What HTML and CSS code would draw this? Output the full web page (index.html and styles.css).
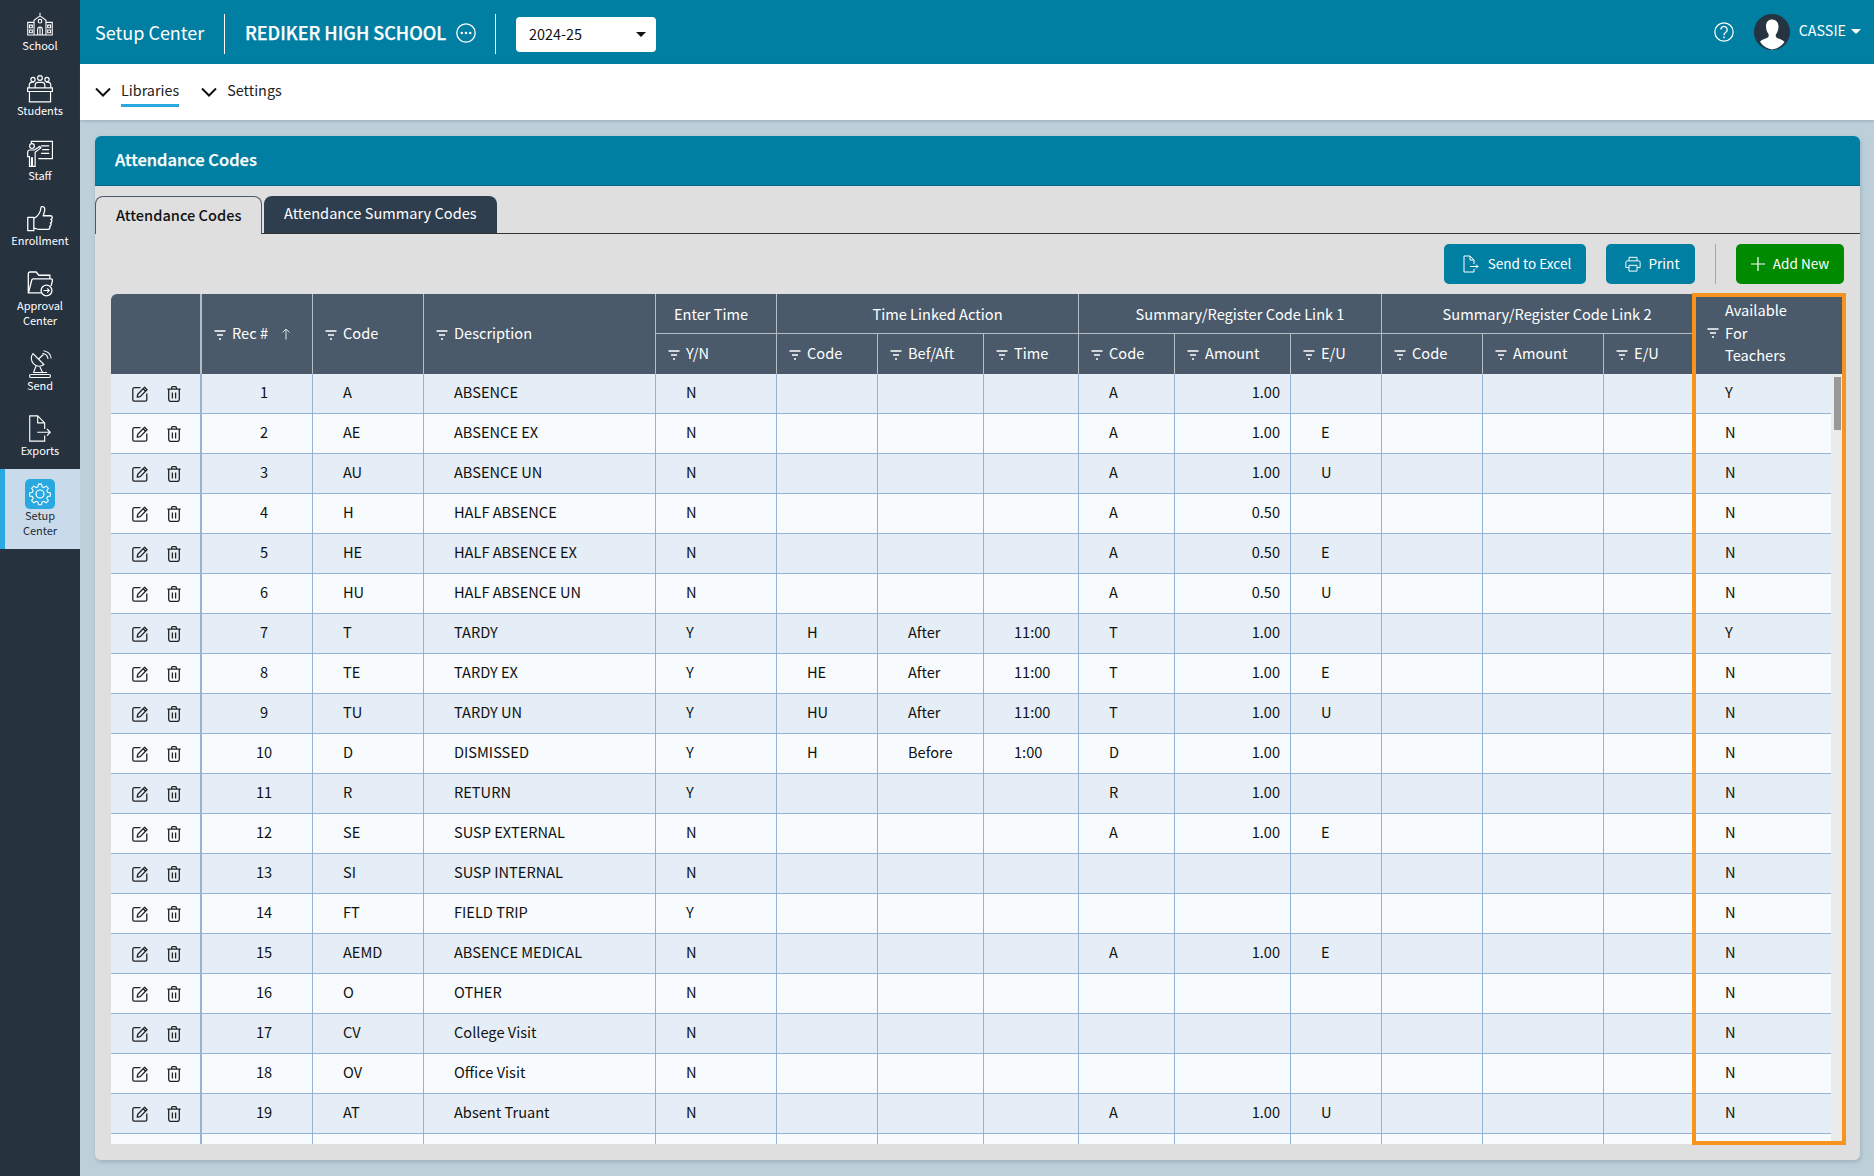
FILE: index.html
```html
<!DOCTYPE html>
<html lang="en">
<head>
<meta charset="utf-8">
<title>Attendance Codes</title>
<link rel="stylesheet" href="styles.css">
</head>
<body>
<svg class="defs" aria-hidden="true">
  <symbol id="i-filter" viewBox="0 0 12 10"><path d="M0.5 1h11M3 5h6M5 9h2" fill="none" stroke="currentColor" stroke-width="1.3"/></symbol>
  <symbol id="i-edit" viewBox="0 0 16 16"><path d="M8.5 1.700H2.200A1.400 1.400 0 0 0 .8 3.100v10.700a1.400 1.400 0 0 0 1.400 1.400h11.200a1.400 1.400 0 0 0 1.400-1.400V7.500" fill="none" stroke="currentColor" stroke-width="1.300"/><path d="M5.200 11.200l.6-3L12.600 1.300l2.400 2.400-6.800 6.900zM11.200 2.800l2.400 2.400" fill="none" stroke="currentColor" stroke-width="1.300" stroke-linejoin="round"/></symbol>
  <symbol id="i-trash" viewBox="0 0 14 16"><path d="M.4 3.200h13.200M4.600 3V1.900A1.200 1.200 0 0 1 5.800.7h2.400a1.200 1.200 0 0 1 1.200 1.200V3M1.700 3.400v9.800a2.300 2.300 0 0 0 2.300 2.300h6a2.300 2.300 0 0 0 2.300-2.300V3.400M5.400 6.600v5.800M8.600 6.600v5.800" fill="none" stroke="currentColor" stroke-width="1.300"/></symbol>
  <symbol id="i-school" viewBox="0 0 24 22"><g fill="none" stroke="currentColor" stroke-width="1"><path d="M6.500 21V7.500L12 3.500l5.500 4V21M12 3.500V.5M.7 21V9.500h5.800M23.300 21V9.500h-5.800M.2 21.200h23.600M9.800 21v-5a2.200 2.200 0 0 1 4.400 0v5M12 13.800V21"/><circle cx="12" cy="8.400" r="1.700"/><path d="M2.300 12h2.600v2.500H2.300zM2.300 16.500h2.600V19H2.300zM19.100 12h2.600v2.500h-2.600zM19.100 16.500h2.600V19h-2.600z"/></g></symbol>
  <symbol id="i-students" viewBox="0 0 24 26"><g fill="none" stroke="currentColor" stroke-width="1.100"><circle cx="12" cy="2.800" r="2.200"/><circle cx="5.500" cy="4.200" r="2"/><circle cx="18.500" cy="4.200" r="2"/><path d="M2 12V9.600a3 3 0 0 1 3-3h1.400M22 12V9.600a3 3 0 0 0-3-3h-1.400M7.500 12V9.400a2.600 2.600 0 0 1 2.600-2.600h3.800a2.600 2.600 0 0 1 2.600 2.600V12M.5 12h23v3.300H.5zM2.200 15.300V25h19.600v-9.700"/></g></symbol>
  <symbol id="i-staff" viewBox="0 0 24 25"><g fill="none" stroke="currentColor" stroke-width="1.100"><path d="M4 3V.8h19.500v16H10.500M13 5h7.500M14 8.500h6.500M13 12h7.500"/><circle cx="4.600" cy="5.200" r="2.200"/><path d="M.6 15V10.800a2 2 0 0 1 2-2h4.200l5-3.300 1 1.400-5.300 4V24H5V16H4.200V24H2.300V15z"/></g></symbol>
  <symbol id="i-thumb" viewBox="0 0 24 24"><g fill="none" stroke="currentColor" stroke-width="1.200" stroke-linejoin="round"><path d="M.7 10.500h5.600v12.300H.7zM6.300 11.500c3-1.500 6.200-5.200 6.700-10.300.1-1 3.300-.9 3.400 1.500.1 2.200-1 5-1.500 6.300h6.700c2 0 2.300 3 .4 3.400 1.400.6 1.200 3-.4 3.200 1 .8.8 2.900-.7 3.100.6 1 .2 2.900-1.600 2.900h-8c-2 0-3-1-5-1.200"/></g></symbol>
  <symbol id="i-folder" viewBox="0 0 24 24"><g fill="none" stroke="currentColor" stroke-width="1.200"><path d="M13 20.200H1.200V2.400a1.500 1.500 0 0 1 1.500-1.500h5.700l2.600 3h10.100v3M1.400 20l3-11.700a1.300 1.300 0 0 1 1.300-1h16.600a1.200 1.200 0 0 1 1.200 1.500l-1.200 5"/><circle cx="18" cy="18" r="5"/><path d="M15.300 18h5.200M18.600 16l2 2-2 2" stroke-width="1"/></g></symbol>
  <symbol id="i-send" viewBox="0 0 24 28"><g fill="none" stroke="currentColor" stroke-width="1.100"><path d="M5 3.500c-2.500 3-2.200 7.500.6 10.400s7.300 3 10.300.6z"/><path d="M10.500 9l5-4.500M8 16l-2.500 6.500M12 17l2.500 5.500M3 24.500h18a1.500 1.500 0 0 1 0 3H3a1.500 1.500 0 0 1 0-3zM5 22.500h14"/><path d="M14.500 3.500a6 6 0 0 1 5.500 5.500M15.500.8a9 9 0 0 1 7.700 7.700"/></g></symbol>
  <symbol id="i-export" viewBox="0 0 24 30"><g fill="none" stroke="currentColor" stroke-width="1.200"><path d="M17 15V8.500L9.500 1H1v27h16v-6M9.500 1v7.500H17M9 18.500h14M19.500 15l3.500 3.500-3.500 3.500"/></g></symbol>
  <symbol id="i-gear" viewBox="0 0 24 24"><g fill="none" stroke="currentColor" stroke-width="1.200"><path d="M10.300 1h3.400l.6 3 2 .9 2.600-1.700 2.400 2.400-1.700 2.600.9 2 3 .6v3.400l-3 .6-.9 2 1.700 2.600-2.400 2.400-2.600-1.700-2 .9-.6 3h-3.400l-.6-3-2-.9-2.600 1.700-2.400-2.400 1.700-2.600-.9-2-3-.6v-3.400l3-.6.9-2-1.700-2.600 2.400-2.400 2.600 1.700 2-.9z" transform="translate(1.200 1.200) scale(.9)"/><circle cx="12" cy="12" r="4"/></g></symbol>
</svg>

<div class="app">
  <aside class="sidebar">
    <a class="nav-item"><svg class="nav-icon"><use href="#i-school"/></svg><span>School</span></a>
    <a class="nav-item"><svg class="nav-icon"><use href="#i-students"/></svg><span>Students</span></a>
    <a class="nav-item"><svg class="nav-icon"><use href="#i-staff"/></svg><span>Staff</span></a>
    <a class="nav-item"><svg class="nav-icon"><use href="#i-thumb"/></svg><span>Enrollment</span></a>
    <a class="nav-item nav-tall"><svg class="nav-icon"><use href="#i-folder"/></svg><span>Approval<br>Center</span></a>
    <a class="nav-item"><svg class="nav-icon"><use href="#i-send"/></svg><span>Send</span></a>
    <a class="nav-item nav-last"><svg class="nav-icon"><use href="#i-export"/></svg><span>Exports</span></a>
    <a class="nav-item nav-active"><span class="gear-tile"><svg class="gear"><use href="#i-gear"/></svg></span><span>Setup<br>Center</span></a>
  </aside>

  <div class="main">
    <header class="topbar">
      <div class="app-title">Setup Center</div>
      <div class="school">
        <span>REDIKER HIGH SCHOOL</span>
        <svg class="dots" viewBox="0 0 20 20"><circle cx="10" cy="10" r="9.200" fill="none" stroke="currentColor" stroke-width="1.300"/><circle cx="5.800" cy="10" r="1.300" fill="currentColor"/><circle cx="10" cy="10" r="1.300" fill="currentColor"/><circle cx="14.200" cy="10" r="1.300" fill="currentColor"/></svg>
      </div>
      <div class="year-select"><span>2024-25</span><i class="caret-dark"></i></div>
      <div class="top-right">
        <svg class="help" viewBox="0 0 20 20"><circle cx="10" cy="10" r="9.200" fill="none" stroke="currentColor" stroke-width="1.200"/><path d="M6.800 7.600a3.200 3.200 0 1 1 5 2.700c-1.200.8-1.800 1.400-1.800 2.900" fill="none" stroke="currentColor" stroke-width="1.300"/><circle cx="10" cy="15.300" r=".9" fill="currentColor"/></svg>
        <svg class="avatar" viewBox="0 0 36 36"><circle cx="18" cy="18" r="18" fill="#263442"/><path d="M18 5.500c4.300 0 6.700 3.200 6.500 7.500-.1 2.500-.9 5-2.300 7-.7 1-.6 3 .6 3.700 2.400 1.300 6 2 7.700 4.300A17.500 17.500 0 0 1 18 35.500 17.500 17.500 0 0 1 6 27.800c1.700-2.300 5.300-3 7.700-4.300 1.200-.7 1.300-2.700.6-3.700-1.400-2-2.200-4.500-2.300-7-.2-4.300 2.200-7.500 6.500-7.500z" fill="#fff"/></svg>
        <span class="user">CASSIE</span><i class="caret-light"></i>
      </div>
    </header>

    <nav class="subnav">
      <div class="sub-item"><svg class="chev" viewBox="0 0 16 10"><path d="M1 1.500l7 7 7-7" fill="none" stroke="currentColor" stroke-width="2"/></svg><span class="sub-link sub-current">Libraries</span></div>
      <div class="sub-item"><svg class="chev" viewBox="0 0 16 10"><path d="M1 1.500l7 7 7-7" fill="none" stroke="currentColor" stroke-width="2"/></svg><span class="sub-link">Settings</span></div>
    </nav>

    <main class="content">
      <section class="panel">
        <h1 class="panel-head">Attendance Codes</h1>
        <div class="panel-body">
          <div class="tabs">
            <div class="tab tab-on">Attendance Codes</div>
            <div class="tab tab-off">Attendance Summary Codes</div>
          </div>
          <div class="toolbar">
            <button class="btn btn-blue btn-excel"><svg class="btn-ico" viewBox="0 0 16 18"><path d="M11 9V5L7 1H1v16h10v-3M7 1v4h4M7 11.500h8M13 9.500l2 2-2 2" fill="none" stroke="currentColor" stroke-width="1"/></svg><span>Send to Excel</span></button>
            <button class="btn btn-blue btn-print"><svg class="btn-ico" viewBox="0 0 18 18"><path d="M4.500 5.500V1.500h9v4M4.500 13H1V7a1.500 1.500 0 0 1 1.500-1.500h13A1.500 1.500 0 0 1 17 7v6h-3.500M4.500 10.500h9v6.500h-9z" fill="none" stroke="currentColor" stroke-width="1.100"/></svg><span>Print</span></button>
            <span class="tool-sep"></span>
            <button class="btn btn-green"><svg class="btn-ico plus" viewBox="0 0 14 14"><path d="M7 0v14M0 7h14" fill="none" stroke="currentColor" stroke-width="1.200"/></svg><span>Add New</span></button>
          </div>

          <div class="grid-frame">
            <div class="grid">
              <table class="codes">
                <colgroup>
                  <col class="c-act"><col class="c-rec"><col class="c-code"><col class="c-desc"><col class="c-yn"><col class="c-tcode"><col class="c-bef"><col class="c-time"><col class="c-scode"><col class="c-amt"><col class="c-eu"><col class="c-scode2"><col class="c-amt2"><col class="c-eu2"><col class="c-avail">
                </colgroup>
                <thead>
                  <tr>
                    <th rowspan="2" class="th-act"></th>
                    <th rowspan="2"><svg class="fl"><use href="#i-filter"/></svg>Rec #<svg class="sort" viewBox="0 0 10 12"><path d="M5 11.500V1M1.500 4.500L5 1l3.500 3.500" fill="none" stroke="currentColor" stroke-width="1"/></svg></th>
                    <th rowspan="2"><svg class="fl"><use href="#i-filter"/></svg>Code</th>
                    <th rowspan="2"><svg class="fl"><use href="#i-filter"/></svg>Description</th>
                    <th class="th-group th-enter">Enter Time</th>
                    <th colspan="3" class="th-group">Time Linked Action</th>
                    <th colspan="3" class="th-group">Summary/Register Code Link 1</th>
                    <th colspan="3" class="th-group">Summary/Register Code Link 2</th>
                    <th rowspan="2" class="th-avail"><svg class="fl"><use href="#i-filter"/></svg><span class="avail-text">Available<br>For<br>Teachers</span></th>
                  </tr>
                  <tr>
                    <th><svg class="fl"><use href="#i-filter"/></svg>Y/N</th>
                    <th><svg class="fl"><use href="#i-filter"/></svg>Code</th>
                    <th><svg class="fl"><use href="#i-filter"/></svg>Bef/Aft</th>
                    <th><svg class="fl"><use href="#i-filter"/></svg>Time</th>
                    <th><svg class="fl"><use href="#i-filter"/></svg>Code</th>
                    <th><svg class="fl"><use href="#i-filter"/></svg>Amount</th>
                    <th><svg class="fl"><use href="#i-filter"/></svg>E/U</th>
                    <th><svg class="fl"><use href="#i-filter"/></svg>Code</th>
                    <th><svg class="fl"><use href="#i-filter"/></svg>Amount</th>
                    <th><svg class="fl"><use href="#i-filter"/></svg>E/U</th>
                  </tr>
                </thead>
                <tbody>
                  <tr><td class="act"><svg class="i-e"><use href="#i-edit"/></svg><svg class="i-t"><use href="#i-trash"/></svg></td><td class="rec">1</td><td>A</td><td>ABSENCE</td><td>N</td><td></td><td></td><td></td><td>A</td><td class="amt">1.00</td><td></td><td></td><td></td><td></td><td class="av">Y</td></tr>
                  <tr><td class="act"><svg class="i-e"><use href="#i-edit"/></svg><svg class="i-t"><use href="#i-trash"/></svg></td><td class="rec">2</td><td>AE</td><td>ABSENCE EX</td><td>N</td><td></td><td></td><td></td><td>A</td><td class="amt">1.00</td><td>E</td><td></td><td></td><td></td><td class="av">N</td></tr>
                  <tr><td class="act"><svg class="i-e"><use href="#i-edit"/></svg><svg class="i-t"><use href="#i-trash"/></svg></td><td class="rec">3</td><td>AU</td><td>ABSENCE UN</td><td>N</td><td></td><td></td><td></td><td>A</td><td class="amt">1.00</td><td>U</td><td></td><td></td><td></td><td class="av">N</td></tr>
                  <tr><td class="act"><svg class="i-e"><use href="#i-edit"/></svg><svg class="i-t"><use href="#i-trash"/></svg></td><td class="rec">4</td><td>H</td><td>HALF ABSENCE</td><td>N</td><td></td><td></td><td></td><td>A</td><td class="amt">0.50</td><td></td><td></td><td></td><td></td><td class="av">N</td></tr>
                  <tr><td class="act"><svg class="i-e"><use href="#i-edit"/></svg><svg class="i-t"><use href="#i-trash"/></svg></td><td class="rec">5</td><td>HE</td><td>HALF ABSENCE EX</td><td>N</td><td></td><td></td><td></td><td>A</td><td class="amt">0.50</td><td>E</td><td></td><td></td><td></td><td class="av">N</td></tr>
                  <tr><td class="act"><svg class="i-e"><use href="#i-edit"/></svg><svg class="i-t"><use href="#i-trash"/></svg></td><td class="rec">6</td><td>HU</td><td>HALF ABSENCE UN</td><td>N</td><td></td><td></td><td></td><td>A</td><td class="amt">0.50</td><td>U</td><td></td><td></td><td></td><td class="av">N</td></tr>
                  <tr><td class="act"><svg class="i-e"><use href="#i-edit"/></svg><svg class="i-t"><use href="#i-trash"/></svg></td><td class="rec">7</td><td>T</td><td>TARDY</td><td>Y</td><td>H</td><td>After</td><td>11:00</td><td>T</td><td class="amt">1.00</td><td></td><td></td><td></td><td></td><td class="av">Y</td></tr>
                  <tr><td class="act"><svg class="i-e"><use href="#i-edit"/></svg><svg class="i-t"><use href="#i-trash"/></svg></td><td class="rec">8</td><td>TE</td><td>TARDY EX</td><td>Y</td><td>HE</td><td>After</td><td>11:00</td><td>T</td><td class="amt">1.00</td><td>E</td><td></td><td></td><td></td><td class="av">N</td></tr>
                  <tr><td class="act"><svg class="i-e"><use href="#i-edit"/></svg><svg class="i-t"><use href="#i-trash"/></svg></td><td class="rec">9</td><td>TU</td><td>TARDY UN</td><td>Y</td><td>HU</td><td>After</td><td>11:00</td><td>T</td><td class="amt">1.00</td><td>U</td><td></td><td></td><td></td><td class="av">N</td></tr>
                  <tr><td class="act"><svg class="i-e"><use href="#i-edit"/></svg><svg class="i-t"><use href="#i-trash"/></svg></td><td class="rec">10</td><td>D</td><td>DISMISSED</td><td>Y</td><td>H</td><td>Before</td><td>1:00</td><td>D</td><td class="amt">1.00</td><td></td><td></td><td></td><td></td><td class="av">N</td></tr>
                  <tr><td class="act"><svg class="i-e"><use href="#i-edit"/></svg><svg class="i-t"><use href="#i-trash"/></svg></td><td class="rec">11</td><td>R</td><td>RETURN</td><td>Y</td><td></td><td></td><td></td><td>R</td><td class="amt">1.00</td><td></td><td></td><td></td><td></td><td class="av">N</td></tr>
                  <tr><td class="act"><svg class="i-e"><use href="#i-edit"/></svg><svg class="i-t"><use href="#i-trash"/></svg></td><td class="rec">12</td><td>SE</td><td>SUSP EXTERNAL</td><td>N</td><td></td><td></td><td></td><td>A</td><td class="amt">1.00</td><td>E</td><td></td><td></td><td></td><td class="av">N</td></tr>
                  <tr><td class="act"><svg class="i-e"><use href="#i-edit"/></svg><svg class="i-t"><use href="#i-trash"/></svg></td><td class="rec">13</td><td>SI</td><td>SUSP INTERNAL</td><td>N</td><td></td><td></td><td></td><td></td><td class="amt"></td><td></td><td></td><td></td><td></td><td class="av">N</td></tr>
                  <tr><td class="act"><svg class="i-e"><use href="#i-edit"/></svg><svg class="i-t"><use href="#i-trash"/></svg></td><td class="rec">14</td><td>FT</td><td>FIELD TRIP</td><td>Y</td><td></td><td></td><td></td><td></td><td class="amt"></td><td></td><td></td><td></td><td></td><td class="av">N</td></tr>
                  <tr><td class="act"><svg class="i-e"><use href="#i-edit"/></svg><svg class="i-t"><use href="#i-trash"/></svg></td><td class="rec">15</td><td>AEMD</td><td>ABSENCE MEDICAL</td><td>N</td><td></td><td></td><td></td><td>A</td><td class="amt">1.00</td><td>E</td><td></td><td></td><td></td><td class="av">N</td></tr>
                  <tr><td class="act"><svg class="i-e"><use href="#i-edit"/></svg><svg class="i-t"><use href="#i-trash"/></svg></td><td class="rec">16</td><td>O</td><td>OTHER</td><td>N</td><td></td><td></td><td></td><td></td><td class="amt"></td><td></td><td></td><td></td><td></td><td class="av">N</td></tr>
                  <tr><td class="act"><svg class="i-e"><use href="#i-edit"/></svg><svg class="i-t"><use href="#i-trash"/></svg></td><td class="rec">17</td><td>CV</td><td>College Visit</td><td>N</td><td></td><td></td><td></td><td></td><td class="amt"></td><td></td><td></td><td></td><td></td><td class="av">N</td></tr>
                  <tr><td class="act"><svg class="i-e"><use href="#i-edit"/></svg><svg class="i-t"><use href="#i-trash"/></svg></td><td class="rec">18</td><td>OV</td><td>Office Visit</td><td>N</td><td></td><td></td><td></td><td></td><td class="amt"></td><td></td><td></td><td></td><td></td><td class="av">N</td></tr>
                  <tr><td class="act"><svg class="i-e"><use href="#i-edit"/></svg><svg class="i-t"><use href="#i-trash"/></svg></td><td class="rec">19</td><td>AT</td><td>Absent Truant</td><td>N</td><td></td><td></td><td></td><td>A</td><td class="amt">1.00</td><td>U</td><td></td><td></td><td></td><td class="av">N</td></tr>
                  <tr><td class="act"></td><td class="rec"></td><td></td><td></td><td></td><td></td><td></td><td></td><td></td><td class="amt"></td><td></td><td></td><td></td><td></td><td class="av"></td></tr>
                </tbody>
              </table>
              <div class="scroll-col"><div class="scroll-corner"></div><div class="scroll-track"><div class="scroll-thumb"></div></div></div>
            </div>
            <div class="highlight"></div>
          </div>
        </div>
      </section>
    </main>
  </div>
</div>
</body>
</html>
```
FILE: styles.css
```css
* { box-sizing: border-box; }
html, body { margin: 0; padding: 0; height: 100%; }
body {
  font-family: "Noto Sans CJK SC", "Noto Sans", sans-serif;
  font-size: 14.6px;
  color: #111;
  overflow: hidden;
}
.defs { position: absolute; width: 0; height: 0; }
.app { display: flex; width: 1874px; height: 1176px; background: #bdd0da; }

/* Sidebar */
.sidebar { width: 80px; flex: none; background: #27323f; color: #fff; display: flex; flex-direction: column; }
.nav-item { display: flex; flex-direction: column; align-items: center; height: 65px; padding-top: 10px; font-size: 11px; line-height: 15px; text-align: center; }
.nav-tall { height: 80px; }
.nav-last { height: 64px; }
.nav-icon { width: 26px; height: 28px; flex: none; color: #fff; }
.nav-active { height: 80px; background: #c9dbeb; border-left: 5px solid #29a9e0; color: #1f2a36; padding-right: 5px; }
.gear-tile { width: 30px; height: 30px; margin-bottom: -1px; flex: none; background: #29a9e0; border-radius: 5px; display: flex; align-items: center; justify-content: center; color: #fff; }
.gear { width: 24px; height: 24px; }

/* Main column */
.main { flex: 1; min-width: 0; display: flex; flex-direction: column; }
.topbar { height: 64px; flex: none; background: #007fa3; color: #fff; display: flex; align-items: center; padding-left: 15px; }
.app-title { font-size: 18px; width: 130px; height: 40px; margin-top: 3px; line-height: 37px; border-right: 1px solid #fff; }
.school { display: flex; align-items: center; gap: 10px; width: 271px; height: 40px; margin-top: 3px; padding: 0 0 3px 20px; border-right: 1px solid #fff; font-size: 18px; font-weight: 500; -webkit-text-stroke: .25px #fff; white-space: nowrap; }
.dots { width: 20px; height: 20px; flex: none; margin-top: 1px; }
.year-select { margin: 5px 0 0 20px; width: 140px; height: 35px; background: #fff; border-radius: 4px; color: #111; display: flex; align-items: center; justify-content: space-between; padding: 0 10px 2px 13px; font-size: 14.4px; }
.caret-dark { width: 0; height: 0; margin-top: 2px; border-left: 5px solid transparent; border-right: 5px solid transparent; border-top: 5px solid #111; }
.top-right { margin-left: auto; display: flex; align-items: center; padding-right: 13px; }
.help { width: 20px; height: 20px; margin-right: 20px; }
.avatar { width: 36px; height: 36px; margin-right: 10px; }
.user { font-size: 14.3px; line-height: 20px; position: relative; top: -2px; margin-left: -1px; }
.caret-light { width: 0; height: 0; margin-left: 5px; border-left: 5px solid transparent; border-right: 5px solid transparent; border-top: 5px solid #fff; position: relative; top: -1px; }

.subnav { height: 56px; flex: none; background: #fff; display: flex; align-items: center; padding-left: 15px; gap: 22px; box-shadow: 0 1px 3px rgba(60,90,110,.3); position: relative; }
.sub-item { display: flex; align-items: center; gap: 10px; color: #111; }
.chev { width: 16px; height: 10px; }
.sub-link { font-size: 14.4px; line-height: 29px; height: 32px; color: #222; position: relative; top: -1px; }
.sub-current { border-bottom: 3px solid #29a9e0; }

.content { flex: 1; padding: 16px 14px 16px 15px; min-height: 0; }
.panel { height: 1024px; display: flex; flex-direction: column; border-radius: 6px; box-shadow: 1px 2px 4px rgba(60,90,110,.25); }
.panel-head { margin: 0; height: 50px; flex: none; background: #007fa3; border-bottom: 1px solid #04688a; border-radius: 6px 6px 0 0; color: #fff; font-size: 16.5px; font-weight: 500; -webkit-text-stroke: .25px #fff; line-height: 47px; padding-left: 20px; }
.panel-body { flex: 1; background: #dfdfdf; border-radius: 0 0 6px 6px; padding-top: 10px; display: flex; flex-direction: column; }

.tabs { display: flex; height: 38px; border-bottom: 1px solid #333; gap: 2px; flex: none; }
.tab { height: 38px; border-radius: 8px 8px 0 0; font-size: 14.6px; }
.tab-on { width: 167px; padding-left: 20px; border: 1px solid #4a5a6b; border-bottom: 0; background: #dfdfdf; color: #111; font-weight: 500; line-height: 36px; }
.tab-off { width: 233px; height: 37px; padding-left: 20px; background: #2f3e4f; color: #fff; line-height: 34px; }

.toolbar { display: flex; justify-content: flex-end; align-items: center; height: 40px; margin: 10px 16px 10px 0; flex: none; }
.btn { height: 40px; border: 0; border-radius: 5px; color: #fff; font: inherit; font-size: 13.6px; display: flex; align-items: center; padding: 0 0 2px; justify-content: center; gap: 9px; }
.btn-blue { background: #007fa3; padding-left: 4px; }
.btn-green { background: #008a00; width: 108px; gap: 8px; }
.btn-excel { width: 142px; }
.btn-print { width: 89px; margin-left: 20px; gap: 7px; }
.btn-ico { width: 16px; height: 18px; flex: none; margin-top: 2px; }
.plus { width: 14px; height: 14px; }
.tool-sep { width: 1px; height: 40px; background: #a6a6a6; margin: 0 20px; }

/* Grid */
.grid-frame { position: relative; margin: 0 17px 0 16px; height: 850px; flex: none; }
.grid { display: flex; align-items: flex-start; height: 850px; overflow: hidden; border-radius: 6px 0 0 0; background: #ebebeb; }
.codes { width: 1720px; flex: none; table-layout: fixed; border-collapse: separate; border-spacing: 0; font-size: 14.6px; }
.c-act { width: 91px; } .c-rec { width: 111px; } .c-code { width: 111px; } .c-desc { width: 232px; }
.c-yn { width: 121px; } .c-tcode { width: 101px; } .c-bef { width: 106px; } .c-time { width: 95px; }
.c-scode { width: 96px; } .c-amt { width: 116px; } .c-eu { width: 91px; } .c-scode2 { width: 101px; }
.c-amt2 { width: 121px; } .c-eu2 { width: 89px; } .c-avail { width: 138px; }

.codes th { height: 40px; padding: 0 0 0 12px; background: #4a5a6b; color: #fff; font-weight: 400; text-align: left; white-space: nowrap; border-right: 1px solid #b4bcc4; border-bottom: 1px solid #b4bcc4; line-height: 20px; }
.codes thead tr:last-child th { border-bottom: 0; padding-bottom: 3px; }
.codes th[rowspan] { border-bottom: 0; padding-bottom: 2px; }
.codes th.th-group { text-align: center; padding: 0 0 0 20px; }
.codes th.th-enter { padding: 0 10px 0 0; }
.codes th.th-act { border-right: 2px solid #b4bcc4; padding: 0; }
.codes th.th-avail { border-right: 0; padding-left: 14px; }
.avail-text { display: inline-block; vertical-align: middle; line-height: 22.5px; }
.fl { width: 12px; height: 10px; margin-right: 6px; color: #fff; vertical-align: -1px; }
.sort { width: 10px; height: 12px; margin-left: 13px; vertical-align: -1px; color: #dfe4e8; }

.codes td { height: 40px; padding: 0 0 3px 30px; color: #111; border-right: 1px solid #95b3d7; border-bottom: 1px solid #95b3d7; white-space: nowrap; background: #f7fbfe; line-height: 20px; }
.codes tbody tr:nth-child(odd) td { background: #e5edf6; }
.codes td.act { padding: 5px 0 0 21px; border-right: 2px solid #95b3d7; }
.codes td.rec { padding: 0 0 3px 14px; text-align: center; }
.codes td.amt { padding: 0 10px 3px 0; text-align: right; }
.codes td.av { border-right: 0; padding-left: 32px; }
.i-e { width: 16px; height: 16px; color: #222; vertical-align: top; }
.i-t { width: 14px; height: 16px; margin-left: 19px; color: #222; vertical-align: top; }

.scroll-col { width: 12px; height: 850px; flex: none; display: flex; flex-direction: column; }
.scroll-corner { height: 80px; flex: none; background: #4a5a6b; }
.scroll-track { flex: 1; background: #ebebeb; padding: 3px 2px 0 3px; }
.scroll-thumb { height: 53px; background: #999; }

.highlight { position: absolute; top: -1px; bottom: -1px; right: -3px; width: 154px; border: 4px solid #f7941d; pointer-events: none; }
```
